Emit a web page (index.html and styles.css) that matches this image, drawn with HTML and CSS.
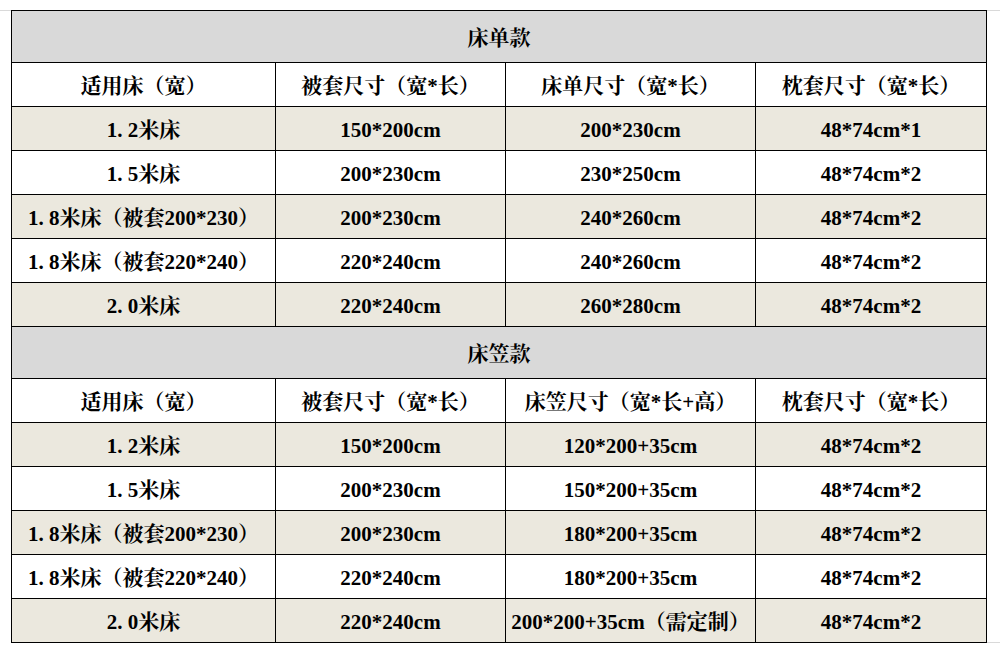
FILE: index.html
```html
<!DOCTYPE html>
<html lang="zh-CN">
<head>
<meta charset="utf-8">
<title>尺寸表</title>
<link rel="stylesheet" href="styles.css">
</head>
<body>
<div class="sheet">
<table class="size-table">
<colgroup>
<col class="c1"><col class="c2"><col class="c3"><col class="c4">
</colgroup>
<tbody>
<tr class="title"><td colspan="4">床单款</td></tr>
<tr class="head"><td>适用床（宽）</td><td>被套尺寸（宽*长）</td><td>床单尺寸（宽*长）</td><td>枕套尺寸（宽*长）</td></tr>
<tr class="alt"><td>1<span class="dot">.</span>2米床</td><td>150*200cm</td><td>200*230cm</td><td>48*74cm*1</td></tr>
<tr><td>1<span class="dot">.</span>5米床</td><td>200*230cm</td><td>230*250cm</td><td>48*74cm*2</td></tr>
<tr class="alt"><td>1<span class="dot">.</span>8米床（被套200*230）</td><td>200*230cm</td><td>240*260cm</td><td>48*74cm*2</td></tr>
<tr><td>1<span class="dot">.</span>8米床（被套220*240）</td><td>220*240cm</td><td>240*260cm</td><td>48*74cm*2</td></tr>
<tr class="alt"><td>2<span class="dot">.</span>0米床</td><td>220*240cm</td><td>260*280cm</td><td>48*74cm*2</td></tr>
<tr class="title"><td colspan="4">床笠款</td></tr>
<tr class="head"><td>适用床（宽）</td><td>被套尺寸（宽*长）</td><td>床笠尺寸（宽*长+高）</td><td>枕套尺寸（宽*长）</td></tr>
<tr class="alt"><td>1<span class="dot">.</span>2米床</td><td>150*200cm</td><td>120*200+35cm</td><td>48*74cm*2</td></tr>
<tr><td>1<span class="dot">.</span>5米床</td><td>200*230cm</td><td>150*200+35cm</td><td>48*74cm*2</td></tr>
<tr class="alt"><td>1<span class="dot">.</span>8米床（被套200*230）</td><td>200*230cm</td><td>180*200+35cm</td><td>48*74cm*2</td></tr>
<tr><td>1<span class="dot">.</span>8米床（被套220*240）</td><td>220*240cm</td><td>180*200+35cm</td><td>48*74cm*2</td></tr>
<tr class="alt"><td>2<span class="dot">.</span>0米床</td><td>220*240cm</td><td>200*200+35cm（需定制）</td><td>48*74cm*2</td></tr>
</tbody>
</table>
</div>
</body>
</html>
```
FILE: styles.css
```css
html, body {
  margin: 0;
  padding: 0;
  background: #ffffff;
}
.sheet {
  position: relative;
  padding: 10px 0 0 11px;
}
/* faint spreadsheet gridlines around the table */
.sheet::before {
  content: "";
  position: absolute;
  left: 0;
  right: 0;
  top: 10px;
  height: 0;
  border-top: 1px solid #d9d9d9;
}
.sheet::after {
  content: "";
  position: absolute;
  left: 11px;
  right: 0;
  top: 642px;
  height: 20px;
  border-top: 1px solid #d9d9d9;
  border-left: 1px solid #d9d9d9;
}
.size-table {
  position: relative;
  z-index: 1;
  border-collapse: collapse;
  table-layout: fixed;
  width: 975px;
  font-family: "Liberation Serif", "Noto Serif CJK SC", "Noto Sans CJK SC", serif;
  font-weight: bold;
  font-size: 21px;
  color: #000;
}
.c1 { width: 264px; }
.c2 { width: 230px; }
.c3 { width: 250px; }
.c4 { width: 231px; }
.size-table td {
  border: 1px solid #000;
  height: 39px;
  padding: 4px 0 0 0;
  text-align: center;
  vertical-align: middle;
  white-space: nowrap;
  line-height: 1;
  background: #ffffff;
}
.size-table tr.title td {
  background: #d9d9d9;
  height: 47px;
}
.size-table tr.alt td {
  background: #ebe8de;
}
.dot {
  display: inline-block;
  width: 0.5em;
  text-align: left;
}
```
